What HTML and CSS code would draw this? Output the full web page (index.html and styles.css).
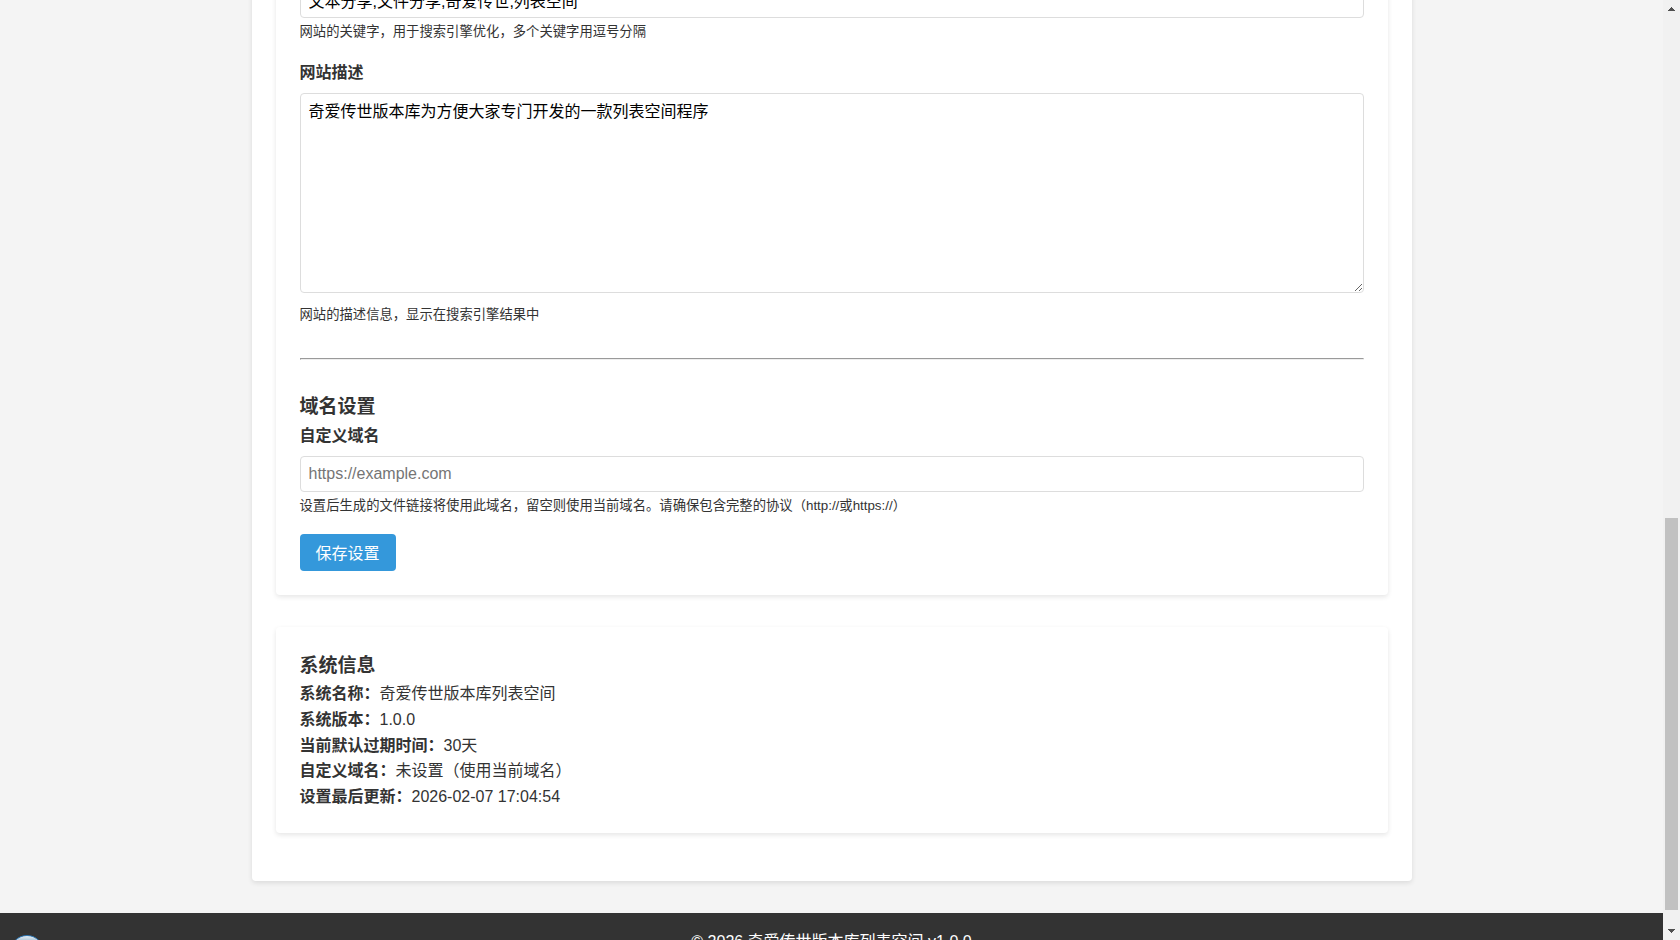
FILE: index.html
```html
<!DOCTYPE html>
<html lang="zh-CN">
<head>
    <meta charset="UTF-8">
    <meta name="viewport" content="width=device-width, initial-scale=1.0">
    <title>系统设置</title>
    <link rel="stylesheet" href="styles.css">
</head>
<body>
    <div class="page">
        <main class="container">
            <section class="card">
                <form>
                    <div class="form-group">
                        <input type="text" id="site_keywords" aria-label="关键字" value="文本分享,文件分享,奇爱传世,列表空间">
                        <small>网站的关键字，用于搜索引擎优化，多个关键字用逗号分隔</small>
                    </div>
                    <div class="form-group">
                        <label for="site_description">网站描述</label>
                        <textarea id="site_description">奇爱传世版本库为方便大家专门开发的一款列表空间程序</textarea>
                        <small>网站的描述信息，显示在搜索引擎结果中</small>
                    </div>
                    <hr>
                    <h3>域名设置</h3>
                    <div class="form-group">
                        <label for="custom_domain">自定义域名</label>
                        <input type="text" id="custom_domain" placeholder="https://example.com">
                        <small>设置后生成的文件链接将使用此域名，留空则使用当前域名。请确保包含完整的协议（http://或https://）</small>
                    </div>
                    <button type="submit" class="btn">保存设置</button>
                </form>
            </section>

            <section class="card">
                <h3>系统信息</h3>
                <p><strong>系统名称：</strong>奇爱传世版本库列表空间</p>
                <p><strong>系统版本：</strong>1.0.0</p>
                <p><strong>当前默认过期时间：</strong>30天</p>
                <p><strong>自定义域名：</strong>未设置（使用当前域名）</p>
                <p><strong>设置最后更新：</strong>2026-02-07 17:04:54</p>
            </section>
        </main>

        <footer class="footer">
            <p>© 2026 奇爱传世版本库列表空间 v1.0.0</p>
        </footer>
        <div class="bubble"></div>
    </div>

    <div class="scrollbar" aria-hidden="true">
        <svg class="arrow" viewBox="0 0 17 17"><path d="M5 11h7v-1h-1v-1h-1v-1h-1v-1h-1v1h-1v1h-1v1h-1z"/></svg>
        <div class="track">
            <div class="thumb"></div>
        </div>
        <svg class="arrow" viewBox="0 0 17 17"><path d="M5 6h7v1h-1v1h-1v1h-1v1h-1v-1h-1v-1h-1v-1h-1z"/></svg>
    </div>
</body>
</html>
```
FILE: styles.css
```css
* {
    margin: 0;
    padding: 0;
    box-sizing: border-box;
}
body {
    display: flex;
    height: 100vh;
    overflow: hidden;
    font-family: "Liberation Sans", Arial, "Noto Sans CJK SC", sans-serif;
    line-height: 1.6;
    color: #333;
    background: #f4f4f4;
}
.page {
    position: relative;
    flex: 1;
    overflow: hidden;
}
.container {
    max-width: 1160px;
    margin: -66px auto 32px;
    padding: 24px;
    background: #fff;
    border-radius: 4px;
    box-shadow: 0 2px 5px rgba(0, 0, 0, 0.1);
}
.card {
    margin-bottom: 32px;
    padding: 24px;
    background: #fff;
    border-radius: 4px;
    box-shadow: 0 2px 5px rgba(0, 0, 0, 0.1);
}
.card:last-child {
    margin-bottom: 24px;
}
h3 {
    font-size: 19px;
}
.form-group {
    margin-bottom: 16px;
}
.form-group label {
    display: block;
    margin-bottom: 8px;
    font-weight: bold;
}
.form-group input,
.form-group textarea {
    width: 100%;
    padding: 8px;
    border: 1px solid #ddd;
    border-radius: 4px;
    font-family: inherit;
    font-size: 16px;
    line-height: 20px;
    color: #000;
    background: #fff;
}
.form-group input {
    display: block;
    height: 36px;
}
.form-group textarea {
    height: 200px;
    resize: vertical;
}
hr {
    margin: 32px 0;
}
.btn {
    display: block;
    padding: 9px 16px 7px;
    border: none;
    border-radius: 4px;
    font-family: inherit;
    font-size: 16px;
    line-height: 21px;
    color: #fff;
    background: #3498db;
    cursor: pointer;
}
.btn:hover {
    background: #2980b9;
}
.footer {
    padding: 16px;
    text-align: center;
    color: #fff;
    background: #333;
}
.bubble {
    position: absolute;
    left: 10px;
    bottom: -29px;
    width: 34px;
    height: 34px;
    border: 1px solid #2f78b5;
    border-radius: 50%;
    background: linear-gradient(#e4edf4, #a9c3d6 5px);
}
.scrollbar {
    display: flex;
    flex-direction: column;
    width: 17px;
    background: #f1f1f1;
}
.arrow {
    width: 17px;
    height: 17px;
    fill: #505050;
}
.track {
    display: flex;
    flex: 1;
    flex-direction: column;
    padding: 0 2px;
}
.track::before {
    content: "";
    flex: 501;
}
.track::after {
    content: "";
    flex: 13;
}
.thumb {
    flex: 392;
    background: #c1c1c1;
}
```
